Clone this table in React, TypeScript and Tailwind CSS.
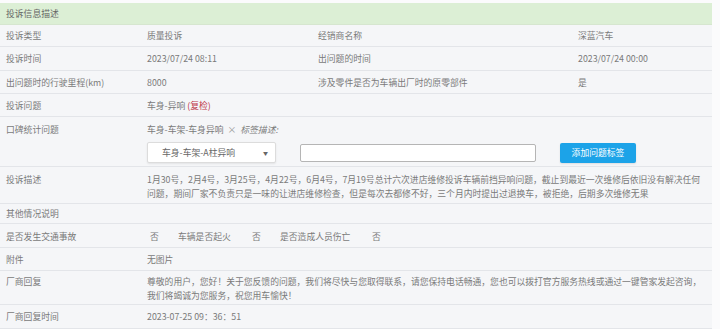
import React from "react";

const font = { fontFamily: '"Noto Sans CJK SC", "Noto Sans", sans-serif' };

function Row4({ a, b, c, d, h }: { a: string; b: string; c: string; d: string; h: string }) {
  return (
    <div className={`grid grid-cols-[147px_171px_260px_1fr] items-center pt-[1px] border-b border-[#e3e5e9] ${h}`}>
      <div className="pl-[6px]">{a}</div>
      <div>{b}</div>
      <div>{c}</div>
      <div>{d}</div>
    </div>
  );
}

function Row({ label, h, children }: { label: string; h: string; children?: React.ReactNode }) {
  return (
    <div className={`flex items-center pt-[1px] border-b border-[#e3e5e9] ${h}`}>
      <div className="w-[147px] shrink-0 pl-[6px]">{label}</div>
      <div className="flex-1 min-w-0">{children}</div>
    </div>
  );
}

export default function App() {
  return (
    <div className="w-[720px] h-[329px] bg-[#fbfbfc] pt-[3px] text-[8.8px] leading-[14px] text-[#7a7a7a]" style={font}>
      <div className="w-[712px] bg-[#f5f6f8]">
        <div className="h-[22px] flex items-center pl-[6px] bg-[#dcefd5] text-[#666] border-b border-[#d6e6cf]">
          投诉信息描述
        </div>
        <Row4 a="投诉类型" b="质量投诉" c="经销商名称" d="深蓝汽车" h="h-[22px]" />
        <Row4 a="投诉时间" b="2023/07/24 08:11" c="出问题的时间" d="2023/07/24 00:00" h="h-[24px]" />
        <Row4 a="出问题时的行驶里程(km)" b="8000" c="涉及零件是否为车辆出厂时的原零部件" d="是" h="h-[23px]" />
        <Row label="投诉问题" h="h-[23px]">
          车身-异响 <span className="text-[#c0394b]">(复检)</span>
        </Row>
        <div className="flex border-b border-[#e3e5e9] h-[50px] pt-[6px]">
          <div className="w-[147px] shrink-0 pl-[6px]">口碑统计问题</div>
          <div className="flex-1 flex flex-col">
            <div>
              车身-车架-车身异响 <span className="text-[#999] mx-[2px]">×</span> <span className="italic">标签描述:</span>
            </div>
            <div className="flex items-center mt-[5px]">
              <div className="w-[129px] h-[21px] bg-white border border-[#dcdcdc] rounded-[2px] shadow-[0_1px_2px_rgba(0,0,0,0.08)] flex items-center justify-between pl-[14px] pr-[7px] text-[#666]">
                <span>车身-车架-A柱异响</span>
                <span className="text-[5px] text-[#666]">▼</span>
              </div>
              <div className="ml-[24px] w-[236px] h-[18px] bg-white border border-[#b5b5b5] rounded-[2px]" />
              <div className="ml-[24px] w-[76px] h-[20px] bg-[#1ca3e8] rounded-[2px] flex items-center justify-center text-white shadow-[0_1px_2px_rgba(0,0,0,0.1)]">
                添加问题标签
              </div>
            </div>
          </div>
        </div>
        <div className="flex border-b border-[#e3e5e9] h-[37px] pt-[6px]">
          <div className="w-[147px] shrink-0 pl-[6px]">投诉描述</div>
          <div className="flex-1 pr-[4px]">
            1月30号，2月4号，3月25号，4月22号，6月4号，7月19号总计六次进店维修投诉车辆前挡异响问题，截止到最近一次维修后依旧没有解决任何问题，期间厂家不负责只是一味的让进店维修检查，但是每次去都修不好，三个月内时提出过退换车，被拒绝，后期多次维修无果
          </div>
        </div>
        <Row label="其他情况说明" h="h-[20px]" />
        <div className="flex items-center pt-[2px] border-b border-[#e3e5e9] h-[24px]">
          <div className="w-[150px] shrink-0 pl-[6px]">是否发生交通事故</div>
          <div className="w-[28px]">否</div>
          <div className="w-[74px]">车辆是否起火</div>
          <div className="w-[28px]">否</div>
          <div className="w-[92px]">是否造成人员伤亡</div>
          <div>否</div>
        </div>
        <Row label="附件" h="h-[23px]">无图片</Row>
        <div className="flex border-b border-[#e3e5e9] h-[34px] pt-[4px]">
          <div className="w-[147px] shrink-0 pl-[6px]">厂商回复</div>
          <div className="flex-1 pr-[4px]">
            尊敬的用户，您好！关于您反馈的问题，我们将尽快与您取得联系，请您保持电话畅通，您也可以拨打官方服务热线或通过一键管家发起咨询，我们将竭诚为您服务，祝您用车愉快！
          </div>
        </div>
        <Row label="厂商回复时间" h="h-[24px]">2023-07-25 09：36：51</Row>
      </div>
    </div>
  );
}
